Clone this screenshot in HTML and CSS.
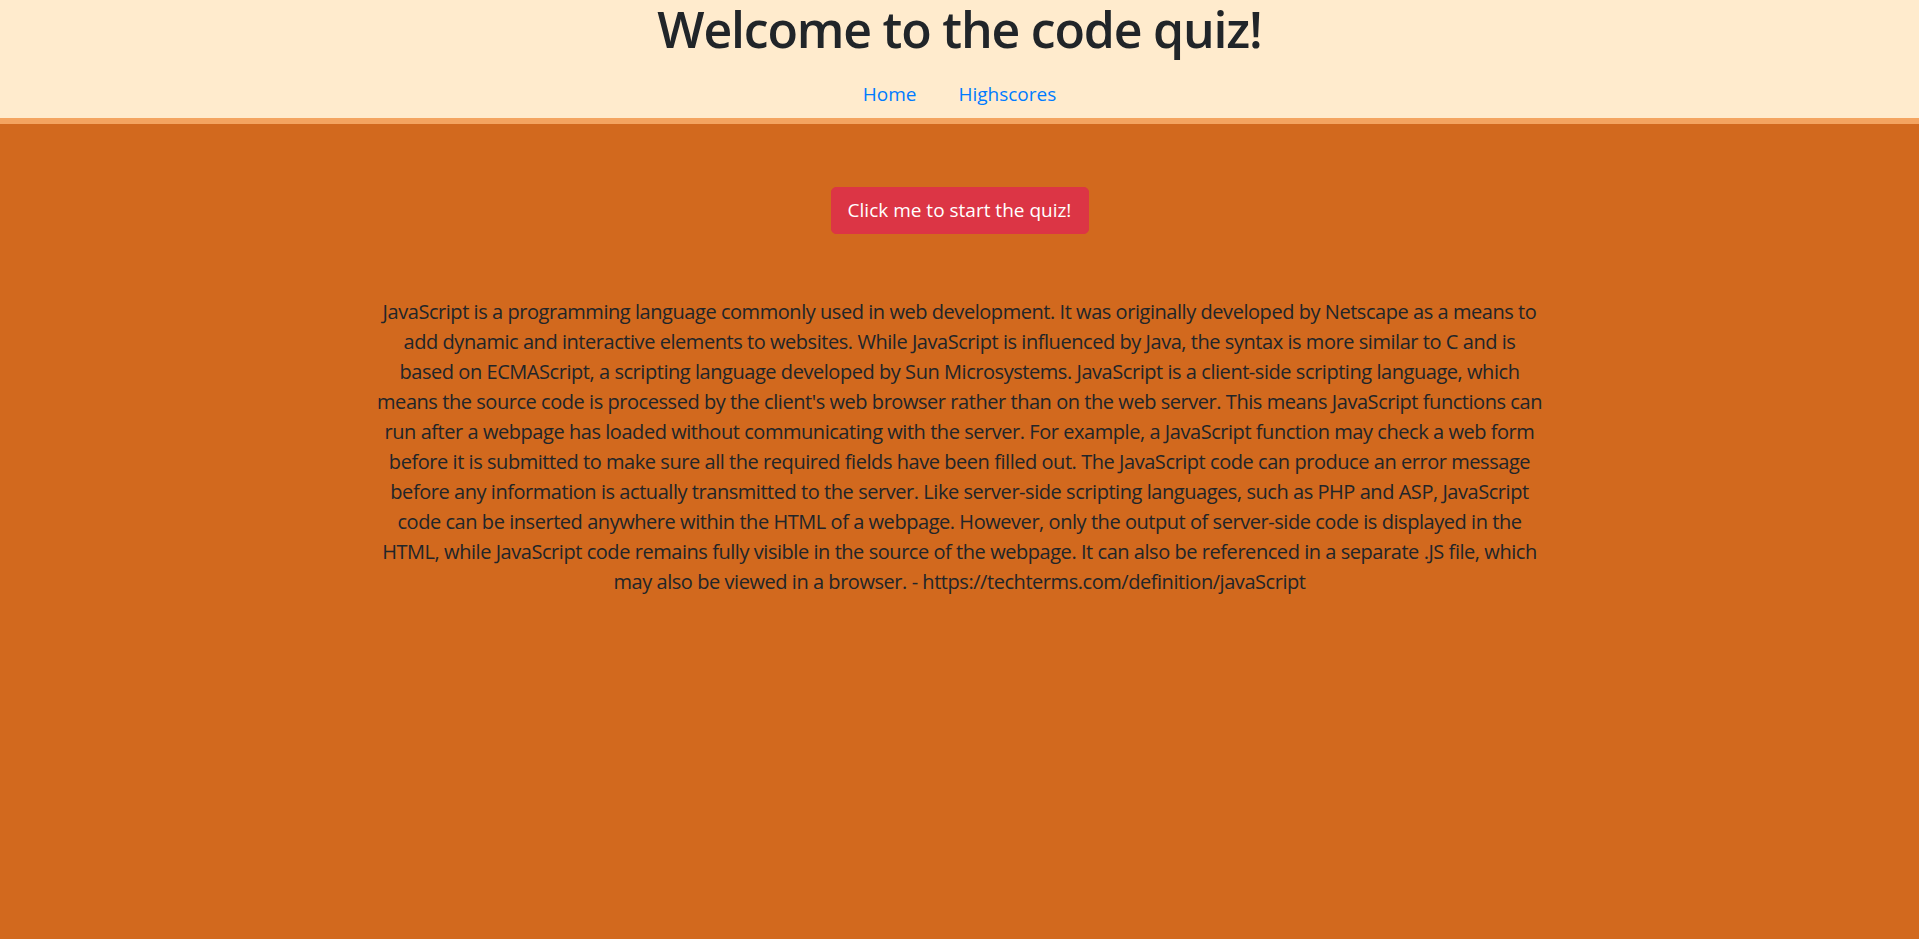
FILE: index.html
```html
<!DOCTYPE html>
<html lang="en">
<head>
<meta charset="utf-8">
<title>Code Quiz</title>
<link rel="stylesheet" href="styles.css">
</head>
<body>
<header class="site-header">
  <h1 class="title">Welcome to the code quiz!</h1>
  <nav class="nav">
    <a class="nav-link" href="#">Home</a>
    <a class="nav-link" href="#">Highscores</a>
  </nav>
</header>
<main class="main">
  <button class="btn-start" type="button">Click me to start the quiz!</button>
  <p class="lead">JavaScript is a programming language commonly used in web development. It was originally developed by Netscape as a means to<br>
add dynamic and interactive elements to websites. While JavaScript is influenced by Java, the syntax is more similar to C and is<br>
based on ECMAScript, a scripting language developed by Sun Microsystems. JavaScript is a client-side scripting language, which<br>
means the source code is processed by the client's web browser rather than on the web server. This means JavaScript functions can<br>
run after a webpage has loaded without communicating with the server. For example, a JavaScript function may check a web form<br>
before it is submitted to make sure all the required fields have been filled out. The JavaScript code can produce an error message<br>
before any information is actually transmitted to the server. Like server-side scripting languages, such as PHP and ASP, JavaScript<br>
code can be inserted anywhere within the HTML of a webpage. However, only the output of server-side code is displayed in the<br>
HTML, while JavaScript code remains fully visible in the source of the webpage. It can also be referenced in a separate .JS file, which<br>
may also be viewed in a browser. - https://techterms.com/definition/javaScript</p>
</main>
</body>
</html>
```
FILE: styles.css
```css
html, body {
  margin: 0;
  padding: 0;
}
body {
  font-family: "Open Sans", "Noto Sans", sans-serif;
  color: #212529;
  background: #d2691e;
  min-height: 939px;
}
.site-header {
  background: #ffebcd;
  border-bottom: 6px solid #f4a460;
  height: 118px;
  box-sizing: border-box;
  padding-top: 4px;
  display: flex;
  flex-direction: column;
  align-items: center;
}
.site-header {
  height: 124px;
}
.title {
  margin: 0;
  font-size: 50px;
  line-height: 50px;
  font-weight: 600;
  letter-spacing: -1.2px;
}
.nav {
  display: flex;
  gap: 42px;
  margin-top: 28px;
}
.nav-link {
  color: #007bff;
  text-decoration: none;
  font-size: 19px;
  line-height: 24px;
}
.main {
  display: flex;
  flex-direction: column;
  align-items: center;
  padding-top: 63px;
}
.btn-start {
  font-family: inherit;
  font-size: 19px;
  line-height: 29px;
  padding: 8px 16px;
  color: #fff;
  background: #dc3545;
  border: 1px solid #dc3545;
  border-radius: 5px;
  width: 258px;
  height: 47px;
}
.lead {
  margin: 63px 0 0;
  max-width: 1300px;
  text-align: center;
  font-size: 20px;
  line-height: 30px;
  letter-spacing: -0.45px;
}
```
